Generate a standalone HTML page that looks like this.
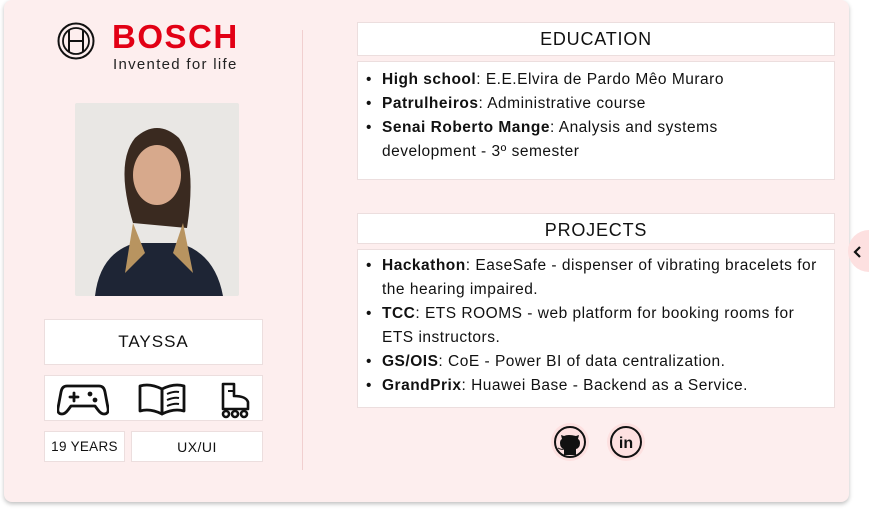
<!DOCTYPE html>
<html><head><style>
*{margin:0;padding:0;box-sizing:border-box}
body{width:869px;height:510px;background:#fff;font-family:"Liberation Sans",sans-serif;color:#111;position:relative;overflow:hidden}
.card{position:absolute;left:4px;top:0;width:845px;height:502px;background:#fdeeee;border-radius:8px;box-shadow:0 2px 4px rgba(0,0,0,.25)}
.box{position:absolute;background:#fff;border:1px solid #ecdede}
.c{display:flex;align-items:center;justify-content:center}
ul{list-style:none;font-size:15.5px;line-height:24px;letter-spacing:.5px}
li{position:relative;padding-left:24px}
li:before{content:"•";position:absolute;left:8px}
b{font-weight:bold}
</style></head><body>
<div class="card"></div>
<svg style="position:absolute;left:56px;top:22px" width="42" height="38" viewBox="0 0 42 38"><circle cx="20" cy="19" r="17.5" fill="none" stroke="#111" stroke-width="2"/><circle cx="20" cy="19" r="13" fill="none" stroke="#111" stroke-width="1.8"/><path d="M13 8v22M27 8v22M13 19h14" stroke="#111" stroke-width="2" fill="none"/></svg>
<div style="position:absolute;left:112px;top:18px;font-size:33px;font-weight:bold;color:#e20015;letter-spacing:1.5px">BOSCH</div>
<div style="position:absolute;left:113px;top:56px;font-size:15px;color:#222;letter-spacing:1.3px">Invented for life</div>
<div style="position:absolute;left:75px;top:103px;width:164px;height:193px;background:#e9e7e4;overflow:hidden;border-radius:2px">
<svg width="164" height="193" viewBox="0 0 164 193"><path d="M58 120 Q40 60 60 35 Q82 15 104 35 Q122 60 112 125 Z" fill="#3a2a20"/><ellipse cx="82" cy="72" rx="24" ry="30" fill="#d7a98c"/><path d="M20 193 Q25 150 60 140 L104 140 Q140 150 148 193 Z" fill="#1e2535"/><path d="M58 120 L50 170 L70 150 Z M108 120 L118 170 L98 150Z" fill="#b89460"/></svg></div>
<div style="position:absolute;left:302px;top:30px;width:1px;height:440px;background:#f1cfcf"></div>
<div class="box c" style="left:44px;top:319px;width:219px;height:46px;font-size:17px;letter-spacing:1px">TAYSSA</div>
<div class="box" style="left:44px;top:375px;width:219px;height:46px">
<svg style="position:absolute;left:12px;top:6px" width="52" height="34" viewBox="0 0 52 34" fill="none" stroke="#111" stroke-width="2.8" stroke-linecap="round" stroke-linejoin="round"><path d="M10 4h32q5 0 6 6l3 16q1 6-4 6-3 0-6-4l-3-4H14l-3 4q-3 4-6 4-5 0-4-6L4 10q1-6 6-6z"/><path d="M13 15h8M17 11v8"/><circle cx="33" cy="12" r="1" fill="#111"/><circle cx="38" cy="18" r="1" fill="#111"/></svg>
<svg style="position:absolute;left:92px;top:6px" width="50" height="34" viewBox="0 0 50 34" fill="none" stroke="#111" stroke-width="2.8" stroke-linejoin="round"><path d="M3 4q10-3 22 3v25q-12-6-22-3z"/><path d="M47 4q-10-3-22 3v25q12-6 22-3z"/><path d="M30 12q7-3 12-2M30 18q7-3 12-2M30 24q7-3 12-2" stroke-width="2"/></svg>
<svg style="position:absolute;left:173px;top:5px" width="36" height="38" viewBox="0 0 36 38" fill="none" stroke="#111" stroke-width="2.6" stroke-linejoin="round"><path d="M5 3h11v12q12 0 14 6v7H5z"/><path d="M10 10h5" stroke-width="2"/><circle cx="8" cy="33" r="3"/><circle cx="17" cy="33" r="3"/><circle cx="26" cy="33" r="3"/></svg>
</div>
<div class="box c" style="left:44px;top:431px;width:81px;height:31px;font-size:13.5px;letter-spacing:.3px">19 YEARS</div>
<div class="box c" style="left:131px;top:431px;width:132px;height:31px;font-size:14px;letter-spacing:.5px">UX/UI</div>
<div class="box c" style="left:357px;top:22px;width:478px;height:34px;font-size:18px;letter-spacing:.8px">EDUCATION</div>
<div class="box" style="left:357px;top:61px;width:478px;height:119px;padding:6px 60px 0 0"><ul>
<li><b>High school</b>: E.E.Elvira de Pardo Mêo Muraro</li>
<li><b>Patrulheiros</b>: Administrative course</li>
<li><b>Senai Roberto Mange</b>: Analysis and systems development - 3º semester</li></ul></div>
<div class="box c" style="left:357px;top:213px;width:478px;height:31px;font-size:18px;padding-top:3px;letter-spacing:.8px">PROJECTS</div>
<div class="box" style="left:357px;top:249px;width:478px;height:159px;padding:4px 10px 0 0"><ul>
<li><b>Hackathon</b>: EaseSafe - dispenser of vibrating bracelets for the hearing impaired.</li>
<li><b>TCC</b>: ETS ROOMS - web platform for booking rooms for ETS instructors.</li>
<li><b>GS/OIS</b>: CoE - Power BI of data centralization.</li>
<li><b>GrandPrix</b>: Huawei Base - Backend as a Service.</li></ul></div>
<svg style="position:absolute;left:550px;top:422px" width="100" height="40" viewBox="0 0 100 40"><circle cx="20" cy="20" r="19" fill="#fde0e0"/><circle cx="20" cy="20" r="15" fill="none" stroke="#111" stroke-width="2"/><path d="M14 33v-6q-4-1-4-6 0-3 2-4l-1-4 3 1q4-2 12 0l3-1-1 4q2 1 2 4 0 5-4 6v6z" fill="#111"/><path d="M8 26q3 2 6 1" stroke="#111" fill="none"/><circle cx="76" cy="20" r="19" fill="#fde0e0"/><circle cx="76" cy="20" r="15" fill="none" stroke="#111" stroke-width="2"/><text x="76" y="26" text-anchor="middle" font-family="Liberation Sans" font-weight="bold" font-size="16" fill="#111">in</text></svg>
<div style="position:absolute;left:848px;top:230px;width:42px;height:42px;border-radius:50%;background:#fde0e0"></div>
<svg style="position:absolute;left:853px;top:245px" width="10" height="14" viewBox="0 0 10 14"><path d="M7 2 2 7l5 5" fill="none" stroke="#111" stroke-width="2.2"/></svg>
</body></html>
